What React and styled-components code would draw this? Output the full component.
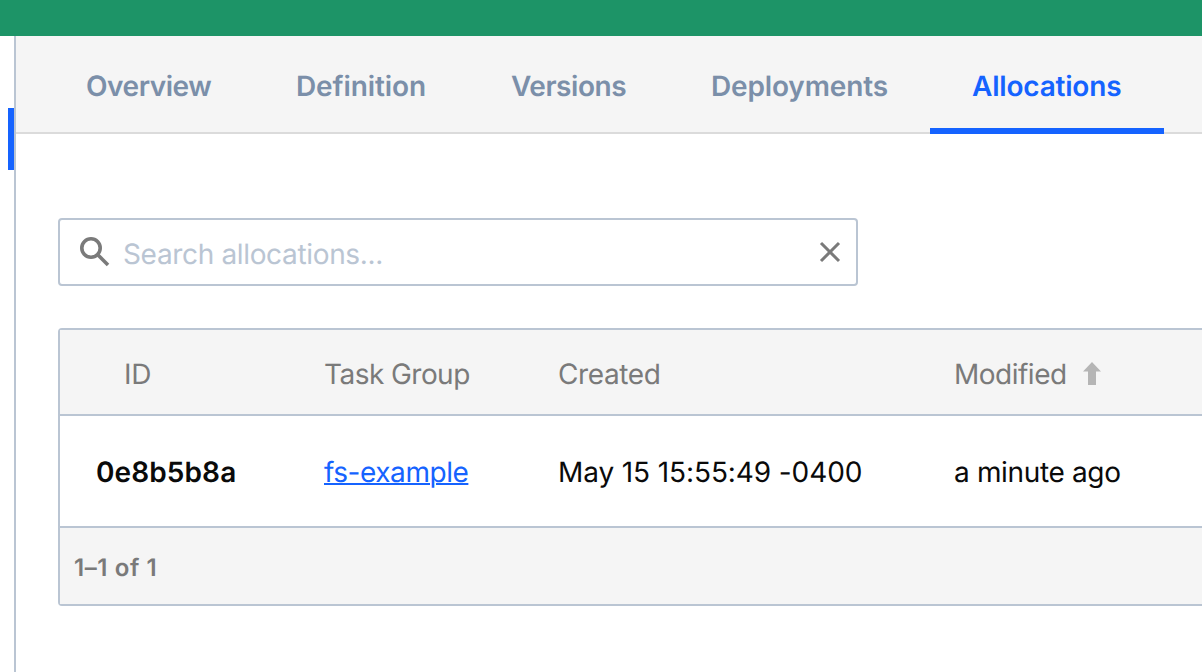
import React from 'react';
import styled, { createGlobalStyle } from 'styled-components';

const Global = createGlobalStyle`
  * { box-sizing: border-box; }
  body { margin: 0; overflow: hidden; background: #fff; font-family: Inter, sans-serif; text-rendering: geometricPrecision; }
`;

const Page = styled.div`
  width: 1202px;
  height: 672px;
  display: flex;
  flex-direction: column;
  overflow: hidden;
`;

const Header = styled.header`
  flex: none;
  height: 36px;
  background: #1d9467;
`;

const Body = styled.div`
  flex: 1;
  display: flex;
  min-height: 0;
`;

const Gutter = styled.aside`
  flex: none;
  width: 16px;
  padding: 72px 0 0 8px;
  border-right: 2px solid #bac5d3;
`;

const ActiveMarker = styled.div`
  width: 6px;
  height: 62px;
  background: #1563ff;
`;

const Main = styled.main`
  flex: 1;
  min-width: 0;
`;

const Tabs = styled.nav`
  display: flex;
  height: 98px;
  padding-left: 28px;
  background: #f5f5f5;
  box-shadow: inset 0 -2px 0 #dbdbdb;
`;

const Tab = styled.a`
  flex: none;
  width: ${(p) => p.$width}px;
  padding-left: 42px;
  line-height: 100px;
  font-size: 28px;
  font-weight: 600;
  letter-spacing: ${(p) => p.$tracking || 0}px;
  white-space: nowrap;
  color: ${(p) => (p.$active ? '#1563ff' : '#7b8fa9')};
  box-shadow: ${(p) => (p.$active ? 'inset 0 -6px 0 #1563ff' : 'none')};
`;

const Content = styled.section`
  padding: 84px 0 0 42px;
`;

const SearchBox = styled.div`
  display: flex;
  align-items: center;
  width: 800px;
  height: 68px;
  margin-bottom: 42px;
  padding: 0 15px 0 19px;
  border: 2px solid #bac5d3;
  border-radius: 4px;
`;

const Placeholder = styled.span`
  flex: 1;
  margin-left: 11px;
  padding-top: 3px;
  font-size: 28px;
  letter-spacing: -0.34px;
  color: #bac5d3;
`;

const Table = styled.div`
  width: 1200px;
  border: 2px solid #bac5d3;
  border-radius: 4px;
`;

const Row = styled.div`
  display: grid;
  grid-template-columns: 264px 234px 396px 1fr;
  align-items: center;
  height: ${(p) => (p.$head ? 86 : 112)}px;
  padding-top: ${(p) => (p.$head ? 4 : 2)}px;
  border-bottom: 2px solid #bac5d3;
  background: ${(p) => (p.$head ? '#f5f5f5' : '#fff')};
  color: ${(p) => (p.$head ? '#7a7a7a' : '#0a0a0a')};
  font-size: 28px;
  white-space: nowrap;
`;

const Cell = styled.div`
  display: flex;
  align-items: center;
  padding-left: ${(p) => p.$indent || 0}px;
  font-weight: ${(p) => (p.$bold ? 600 : 400)};
  letter-spacing: ${(p) => p.$tracking || 0}px;
`;

const Link = styled.a`
  color: #1563ff;
  text-decoration: underline;
  text-decoration-thickness: 2px;
`;

const Footer = styled.div`
  height: 76px;
  padding-left: 14px;
  line-height: 79px;
  background: #f5f5f5;
  color: #7a7a7a;
  font-size: 24px;
  font-weight: 600;
  letter-spacing: 0.6px;
`;

const SearchIcon = () => (
  <svg width="33" height="32" viewBox="0 0 33 32" fill="none" stroke="#7a7a7a" strokeWidth="3.6">
    <circle cx="12" cy="12" r="9.2" />
    <path d="M18.5 18.5L29 29" strokeWidth="3.6" />
  </svg>
);

const CloseIcon = () => (
  <svg width="22" height="22" viewBox="0 0 22 22" fill="none" stroke="#7a7a7a" strokeWidth="3">
    <path d="M2 2L20 20M20 2L2 20" />
  </svg>
);

const SortIcon = styled.svg`
  margin: 0 0 1px 16px;
`;

export default function App() {
  return (
    <Page>
      <Global />
      <Header />
      <Body>
        <Gutter><ActiveMarker /></Gutter>
        <Main>
          <Tabs>
            <Tab $width={210} $tracking={-0.45}>Overview</Tab>
            <Tab $width={215} $tracking={-0.1}>Definition</Tab>
            <Tab $width={200} $tracking={-0.45}>Versions</Tab>
            <Tab $width={261} $tracking={-0.15}>Deployments</Tab>
            <Tab $width={234} $tracking={-0.2} $active>Allocations</Tab>
          </Tabs>
          <Content>
            <SearchBox>
              <SearchIcon />
              <Placeholder>Search allocations...</Placeholder>
              <CloseIcon />
            </SearchBox>
            <Table>
              <Row $head>
                <Cell $indent={64} $tracking={-0.3}>ID</Cell>
                <Cell $tracking={-0.55}>Task Group</Cell>
                <Cell $tracking={-0.4}>Created</Cell>
                <Cell $tracking={-0.5}>
                  Modified
                  <SortIcon width="18" height="23" viewBox="0 0 18 23">
                    <path d="M9 0L18 9.5H13V23H5V9.5H0Z" fill="#b5b5b5" />
                  </SortIcon>
                </Cell>
              </Row>
              <Row>
                <Cell $indent={36} $tracking={0.1} $bold>0e8b5b8a</Cell>
                <Cell $tracking={-0.45}><Link>fs-example</Link></Cell>
                <Cell $tracking={-0.1}>May 15 15:55:49 -0400</Cell>
                <Cell $tracking={-0.35}>a minute ago</Cell>
              </Row>
              <Footer>1–1 of 1</Footer>
            </Table>
          </Content>
        </Main>
      </Body>
    </Page>
  );
}
